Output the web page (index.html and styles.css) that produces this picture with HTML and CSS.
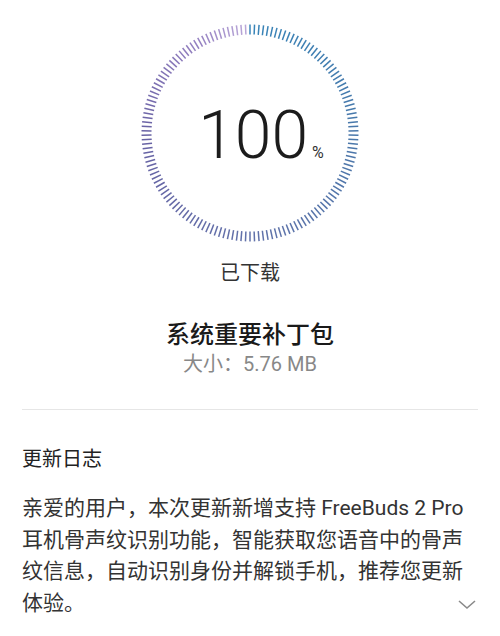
FILE: index.html
```html
<!DOCTYPE html>
<html lang="zh-CN">
  <head>
    <meta charset="utf-8">
    <title>系统更新</title>
    <link rel="stylesheet" href="styles.css">
  </head>
  <body>
    <div class="top">
      <div class="ring">
        <svg id="ticks" width="220" height="220" viewBox="-110 -110 220 220"></svg>
        <div class="percent">
          <span class="num">100</span><span class="pct">%</span>
        </div>
      </div>
      <div class="state">已下载</div>
      <div class="title">系统重要补丁包</div>
      <div class="size">大小：5.76 MB</div>
    </div>

    <div class="divider"></div>

    <div class="log">
      <div class="log-head">更新日志</div>
      <p class="log-text">亲爱的用户，本次更新新增支持 FreeBuds 2 Pro 耳机骨声纹识别功能，智能获取您语音中的骨声纹信息，自动识别身份并解锁手机，推荐您更新体验。</p>
      <svg class="more" width="18" height="10" viewBox="0 0 18 10">
        <path d="M1 1 L9 8 L17 1" fill="none" stroke="#8a8a8a" stroke-width="1.6"/>
      </svg>
    </div>

    <script>
      // -- ring ticks, coloured round the dial --
      let svg = document.getElementById("ticks");
      let count = 150;
      let stops = [
        [0, [56, 132, 184]],
        [0.25, [74, 120, 170]],
        [0.5, [98, 114, 170]],
        [0.75, [104, 98, 164]],
        [0.92, [150, 130, 194]],
        [1, [188, 170, 218]],
      ];

      function colorAt(t) {
        for (let i = 0; i < stops.length - 1; i++) {
          let a = stops[i], b = stops[i + 1];
          if (t >= a[0] && t <= b[0]) {
            let k = (t - a[0]) / (b[0] - a[0]);
            let c = a[1].map((v, j) => Math.round(v + (b[1][j] - v) * k));
            return "rgb(" + c.join(",") + ")";
          }
        }
        return "rgb(56,132,184)";
      }

      let out = "";
      for (let i = 0; i < count; i++) {
        let t = i / count;
        let ang = t * Math.PI * 2;
        let s = Math.sin(ang), c = -Math.cos(ang);
        out += '<line x1="' + (s * 98.5).toFixed(2) + '" y1="' + (c * 98.5).toFixed(2) +
          '" x2="' + (s * 108.5).toFixed(2) + '" y2="' + (c * 108.5).toFixed(2) +
          '" stroke="' + colorAt(t) + '" stroke-width="1.5"/>';
      }
      svg.innerHTML = out;
    </script>
  </body>
</html>
```

FILE: styles.css
```css
* {
  box-sizing: border-box;
}
body {
  margin: 0;
  background: #ffffff;
  font-family: "Roboto", "Noto Sans CJK SC", sans-serif;
  color: #222;
}
.top {
  display: flex;
  flex-direction: column;
  align-items: center;
  padding-top: 23px;
}
.ring {
  position: relative;
  width: 220px;
  height: 220px;
}
#ticks {
  display: block;
}
.percent {
  position: absolute;
  inset: 0;
  display: flex;
  justify-content: center;
  align-items: baseline;
  padding-left: 22px;
  padding-top: 80px;
}
.num {
  font-family: "Roboto", sans-serif;
  font-weight: 300;
  font-size: 66px;
  line-height: 66px;
  color: #1c1c1c;
}
.pct {
  font-family: "Roboto", sans-serif;
  font-size: 16px;
  margin-left: 4px;
  color: #333;
}
.state {
  margin-top: 16px;
  font-size: 20px;
  line-height: 28px;
  color: #333;
}
.title {
  margin-top: 33px;
  font-size: 24px;
  line-height: 30px;
  font-weight: 500;
  color: #1a1a1a;
}
.size {
  margin-top: 1px;
  font-size: 20px;
  line-height: 26px;
  color: #888;
}
.divider {
  margin: 32px 22px 0;
  height: 1px;
  background: #e6e6e6;
}
.log {
  position: relative;
  padding: 0 22px;
}
.log-head {
  margin-top: 35px;
  font-size: 20px;
  line-height: 28px;
  color: #222;
}
.log-text {
  margin: 20px 0 0;
  font-size: 21px;
  line-height: 31.7px;
  color: #333;
}
.more {
  position: absolute;
  right: 24px;
  bottom: 10px;
}
```
